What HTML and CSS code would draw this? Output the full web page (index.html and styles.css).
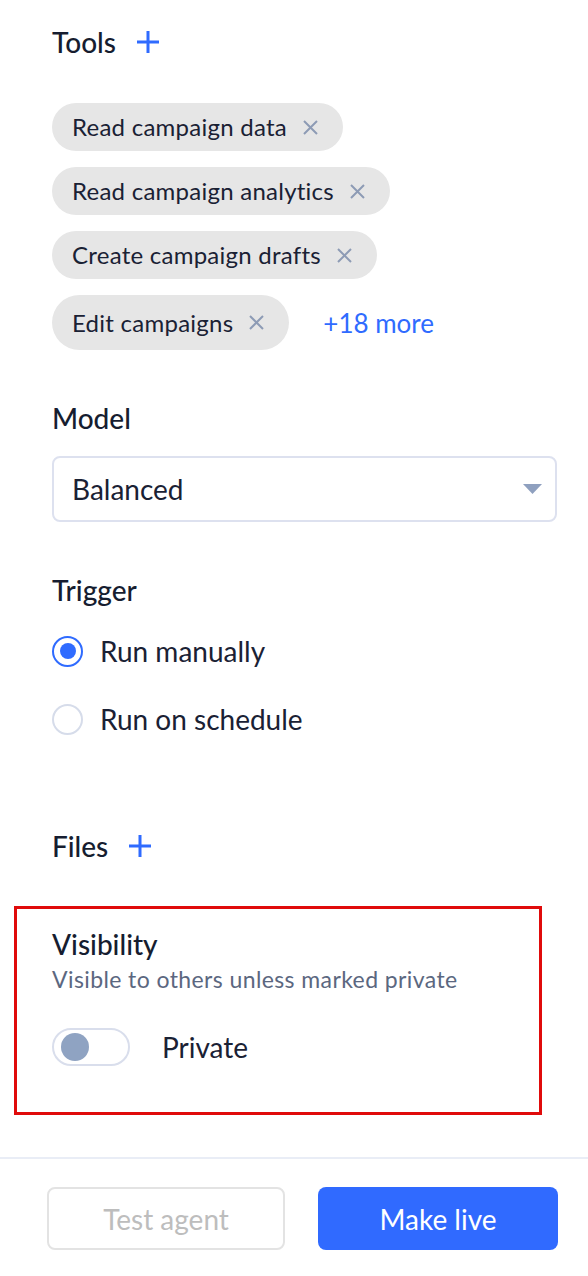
FILE: index.html
```html
<!DOCTYPE html>
<html lang="en">
<head>
<meta charset="utf-8">
<title>Agent settings</title>
<link rel="stylesheet" href="styles.css">
</head>
<body>
<div class="panel">
  <section class="tools">
    <div class="head-row">
      <h2 class="heading">Tools</h2>
      <svg class="plus" width="22" height="22" viewBox="0 0 22 22" aria-hidden="true"><path d="M11 0V22M0 11H22" stroke="currentColor" stroke-width="3" fill="none"/></svg>
    </div>
    <div class="chips">
      <span class="chip">Read campaign data<svg class="x" width="15" height="15" viewBox="0 0 15 15"><path d="M1 1L14 14M14 1L1 14" stroke="currentColor" stroke-width="2" fill="none"/></svg></span>
      <span class="chip">Read campaign analytics<svg class="x" width="15" height="15" viewBox="0 0 15 15"><path d="M1 1L14 14M14 1L1 14" stroke="currentColor" stroke-width="2" fill="none"/></svg></span>
      <span class="chip">Create campaign drafts<svg class="x" width="15" height="15" viewBox="0 0 15 15"><path d="M1 1L14 14M14 1L1 14" stroke="currentColor" stroke-width="2" fill="none"/></svg></span>
      <div class="last-row">
        <span class="chip">Edit campaigns<svg class="x" width="15" height="15" viewBox="0 0 15 15"><path d="M1 1L14 14M14 1L1 14" stroke="currentColor" stroke-width="2" fill="none"/></svg></span>
        <a class="more">+18 more</a>
      </div>
    </div>
  </section>

  <section class="model">
    <h2 class="heading">Model</h2>
    <div class="select">
      <span>Balanced</span>
      <svg class="caret" width="19" height="10" viewBox="0 0 19 10"><path d="M0 0H19L9.5 10Z" fill="currentColor"/></svg>
    </div>
  </section>

  <section class="trigger">
    <h2 class="heading">Trigger</h2>
    <div class="radios">
      <label class="radio-row"><span class="radio on"></span><span>Run manually</span></label>
      <label class="radio-row"><span class="radio"></span><span>Run on schedule</span></label>
    </div>
  </section>

  <section class="files">
    <div class="head-row">
      <h2 class="heading">Files</h2>
      <svg class="plus" width="22" height="22" viewBox="0 0 22 22" aria-hidden="true"><path d="M11 0V22M0 11H22" stroke="currentColor" stroke-width="3" fill="none"/></svg>
    </div>
  </section>

  <section class="visibility">
    <h2 class="heading">Visibility</h2>
    <p class="sub">Visible to others unless marked private</p>
    <div class="toggle-row">
      <span class="toggle"><span class="knob"></span></span>
      <span>Private</span>
    </div>
  </section>
</div>
<footer class="footer">
  <button class="btn ghost">Test agent</button>
  <button class="btn primary">Make live</button>
</footer>
</body>
</html>
```
FILE: styles.css
```css
* { box-sizing: border-box; }
html, body { margin: 0; padding: 0; background: #fff; }
body {
  width: 588px;
  height: 1276px;
  overflow: hidden;
  font-family: "Lato", "Liberation Sans", sans-serif;
  color: #1a2134;
  font-size: 28px;
  line-height: 32px;
}
.panel {
  padding: 26px 31px 42px 52px;
  display: flex;
  flex-direction: column;
}
.heading {
  margin: 0;
  font-size: 28px;
  line-height: 32px;
  font-weight: 500;
  color: #161d30;
}
.head-row {
  display: flex;
  align-items: center;
  gap: 21px;
}
.plus { color: #2f6bff; display: block; }

.chips {
  margin-top: 45px;
  display: flex;
  flex-direction: column;
  align-items: flex-start;
  gap: 16px;
}
.chip {
  display: inline-flex;
  align-items: center;
  gap: 16px;
  background: #e6e6e6;
  border-radius: 28px;
  padding: 12px 25px 12px 20px;
  font-size: 24px;
  line-height: 24px;
  letter-spacing: 0.25px;
  color: #1a2134;
}
.chip .x { color: #8d9bb5; display: block; }
.last-row {
  display: flex;
  align-items: stretch;
  gap: 34px;
}
.last-row .chip { height: 55px; }
.more {
  display: flex;
  align-items: center;
  font-size: 26px;
  color: #2f6bff;
  cursor: pointer;
}

.model { margin-top: 52px; }
.select {
  margin-top: 22px;
  height: 66px;
  border: 2px solid #dde1ef;
  border-radius: 8px;
  display: flex;
  align-items: center;
  justify-content: space-between;
  padding: 0 13px 0 18px;
}
.caret { color: #8fa0bf; display: block; }

.trigger { margin-top: 52px; }
.radios {
  margin-top: 29px;
  display: flex;
  flex-direction: column;
  gap: 36px;
}
.radio-row {
  display: flex;
  align-items: center;
  gap: 17px;
  height: 32px;
}
.radio {
  width: 31px;
  height: 31px;
  border-radius: 50%;
  border: 2px solid #d6dcea;
  display: flex;
  align-items: center;
  justify-content: center;
  flex: none;
}
.radio.on { border-color: #2f6bff; }
.radio.on::after {
  content: "";
  width: 16px;
  height: 16px;
  border-radius: 50%;
  background: #2f6bff;
}

.files { margin-top: 95px; }

.visibility {
  margin: 44px 15px 0 -38px;
  border: 3px solid #e00b0b;
  padding: 19px 0 46px 35px;
}
.sub {
  margin: 6px 0 0;
  font-size: 23px;
  line-height: 26px;
  letter-spacing: 0.4px;
  color: #5b6780;
}
.toggle-row {
  margin-top: 36px;
  display: flex;
  align-items: center;
  gap: 32px;
}
.toggle {
  width: 78px;
  height: 38px;
  border: 2px solid #d9deec;
  border-radius: 19px;
  display: flex;
  align-items: center;
  padding-left: 7px;
  flex: none;
}
.knob {
  width: 28px;
  height: 28px;
  border-radius: 50%;
  background: #8fa3c2;
}

.footer {
  border-top: 2px solid #e9edf6;
  padding: 28px 30px 25px 47px;
  display: flex;
  gap: 33px;
}
.btn {
  height: 63px;
  border-radius: 8px;
  font-family: inherit;
  font-size: 28px;
  padding: 0;
  flex: none;
}
.btn.ghost {
  width: 238px;
  background: #fff;
  border: 2px solid #e3e3e3;
  color: #bdbdbd;
}
.btn.primary {
  width: 240px;
  background: #306aff;
  border: none;
  color: #fff;
}
```
